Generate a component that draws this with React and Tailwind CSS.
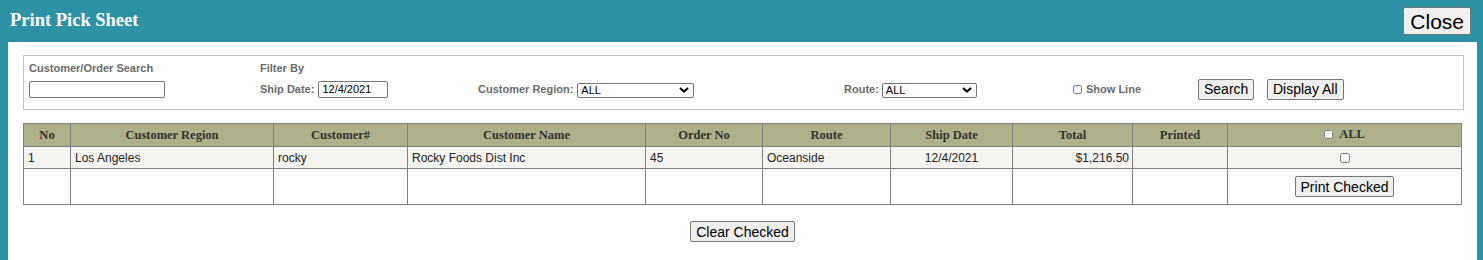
import React, { useState } from "react";

const columns = [
  { label: "No", width: "w-[47px]" },
  { label: "Customer Region", width: "w-[203px]" },
  { label: "Customer#", width: "w-[134px]" },
  { label: "Customer Name", width: "w-[238px]" },
  { label: "Order No", width: "w-[117px]" },
  { label: "Route", width: "w-[128px]" },
  { label: "Ship Date", width: "w-[122px]" },
  { label: "Total", width: "w-[120px]" },
  { label: "Printed", width: "w-[95px]" },
];

const rows = [
  {
    no: 1,
    region: "Los Angeles",
    customer: "rocky",
    name: "Rocky Foods Dist Inc",
    order: "45",
    route: "Oceanside",
    shipDate: "12/4/2021",
    total: "$1,216.50",
    printed: "",
  },
];

const btn =
  "bg-[#efefef] border border-[#767676] rounded-[2px] text-black leading-none";

function Select({ width }) {
  return (
    <div className={`relative h-[15px] ${width}`}>
      <select className="appearance-none w-full h-full border border-[#767676] rounded-[2px] bg-white text-[11px] leading-[13px] pl-[3px] text-black font-normal">
        <option>ALL</option>
      </select>
      <svg
        className="absolute right-[5px] top-[5px] pointer-events-none"
        width="10"
        height="6"
        viewBox="0 0 10 6"
      >
        <path d="M1 1l4 3.6L9 1" stroke="#000" strokeWidth="2" fill="none" />
      </svg>
    </div>
  );
}

function App() {
  const [checked, setChecked] = useState({});
  const [all, setAll] = useState(false);

  return (
    <div className="min-h-[260px] bg-[#2e92a7] font-['Liberation_Sans',Arial,sans-serif] flex flex-col">
      <div className="h-[42px] flex items-center justify-between pl-[10px] pr-[12px]">
        <h1 className="text-white font-bold text-[18.5px] font-['Liberation_Serif','Times_New_Roman',serif]">
          Print Pick Sheet
        </h1>
        <button className={`${btn} text-[21px] h-[28px] px-[6px]`}>Close</button>
      </div>

      <div className="flex-1 bg-white ml-[8px] mr-[6px] pt-[13px] pb-[17px]">
        <div className="ml-[15px] mr-[13px] border border-[#c4c4c4] pl-[5px] pt-[5px] pb-[9px] text-[11px] font-bold text-[#6b6b6b]">
          <div className="flex h-[14px] leading-[14px]">
            <div className="w-[231px]">Customer/Order Search</div>
            <div>Filter By</div>
          </div>
          <div className="flex items-center h-[22px] mt-[3px]">
            <div className="w-[231px] flex items-center">
              <input
                type="text"
                className="w-[136px] h-[17px] border border-[#767676] rounded-[2px] text-[11px] px-[3px] font-normal text-black"
              />
            </div>
            <div className="w-[218px] flex items-center gap-[4px]">
              <span>Ship Date:</span>
              <input
                type="text"
                defaultValue="12/4/2021"
                className="w-[70px] h-[17px] border border-[#767676] rounded-[2px] text-[11px] px-[3px] font-normal text-black"
              />
            </div>
            <div className="w-[366px] flex items-center gap-[4px]">
              <span>Customer Region:</span>
              <Select width="w-[117px]" />
            </div>
            <div className="w-[229px] flex items-center gap-[3px]">
              <span>Route:</span>
              <Select width="w-[95px]" />
            </div>
            <label className="w-[125px] flex items-center gap-[4px]">
              <input type="checkbox" className="w-[9px] h-[9px] m-0" />
              <span>Show Line</span>
            </label>
            <div className="w-[69px] flex items-center">
              <button className={`${btn} text-[14px] h-[21px] px-[5px] font-normal`}>
                Search
              </button>
            </div>
            <button className={`${btn} text-[14px] h-[21px] px-[5px] font-normal`}>
              Display All
            </button>
          </div>
        </div>

        <table className="ml-[15px] mt-[13px] w-[1439px] table-fixed border-collapse text-[12px] text-[#222]">
          <colgroup>
            {columns.map((c) => (
              <col key={c.label} className={c.width} />
            ))}
            <col />
          </colgroup>
          <thead>
            <tr className="bg-[#afaf89] h-[23px] text-[#333] font-['Liberation_Serif','Times_New_Roman',serif] text-[12.5px]">
              {columns.map((c) => (
                <th key={c.label} className="border border-[#808080] font-bold">
                  {c.label}
                </th>
              ))}
              <th className="border border-[#808080] font-bold">
                <label className="inline-flex items-center gap-[6px]">
                  <input
                    type="checkbox"
                    checked={all}
                    onChange={(e) => setAll(e.target.checked)}
                    className="w-[9px] h-[9px] m-0"
                  />
                  ALL
                </label>
              </th>
            </tr>
          </thead>
          <tbody>
            {rows.map((r) => (
              <tr key={r.no} className="bg-[#f5f4f0] h-[22px]">
                <td className="border border-[#808080] px-[4px]">{r.no}</td>
                <td className="border border-[#808080] px-[4px]">{r.region}</td>
                <td className="border border-[#808080] px-[4px]">{r.customer}</td>
                <td className="border border-[#808080] px-[4px]">{r.name}</td>
                <td className="border border-[#808080] px-[4px]">{r.order}</td>
                <td className="border border-[#808080] px-[4px]">{r.route}</td>
                <td className="border border-[#808080] px-[4px] text-center">
                  {r.shipDate}
                </td>
                <td className="border border-[#808080] px-[3px] text-right">
                  {r.total}
                </td>
                <td className="border border-[#808080] px-[4px]">{r.printed}</td>
                <td className="border border-[#808080] text-center">
                  <input
                    type="checkbox"
                    checked={all || !!checked[r.no]}
                    onChange={(e) =>
                      setChecked({ ...checked, [r.no]: e.target.checked })
                    }
                    className="w-[10px] h-[10px] m-0 align-middle"
                  />
                </td>
              </tr>
            ))}
            <tr className="h-[36px]">
              {columns.map((c) => (
                <td key={c.label} className="border border-[#808080]"></td>
              ))}
              <td className="border border-[#808080] text-center">
                <button className={`${btn} text-[14px] h-[21px] px-[5px]`}>
                  Print Checked
                </button>
              </td>
            </tr>
          </tbody>
        </table>

        <div className="flex justify-center mt-[16px]">
          <button
            onClick={() => {
              setChecked({});
              setAll(false);
            }}
            className={`${btn} text-[14px] h-[21px] px-[5px]`}
          >
            Clear Checked
          </button>
        </div>
      </div>
    </div>
  );
}

export default App;
